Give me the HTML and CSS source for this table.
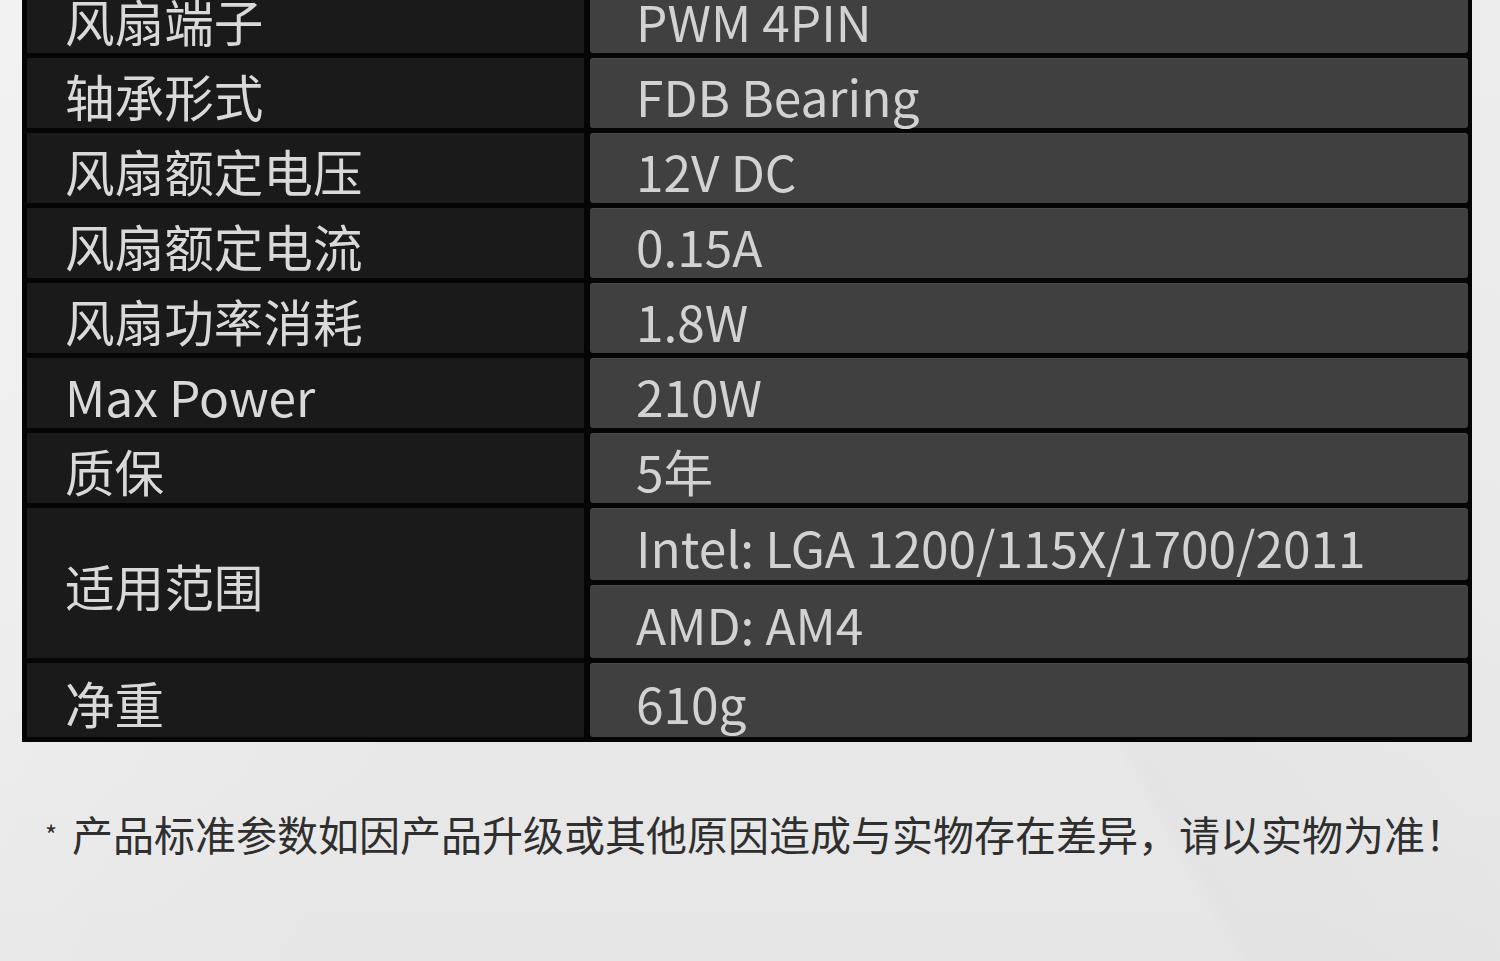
FILE: index.html
```html
<!DOCTYPE html>
<html lang="zh-CN">
<head>
  <meta charset="UTF-8">
  <meta name="viewport" content="width=device-width, initial-scale=1.0">
  <title>产品参数</title>
  <link rel="stylesheet" href="styles.css">
</head>
<body>
  <div class="spec-wrap">
    <div class="spec-table">
      <div class="key">风扇端子</div>
      <div class="val">PWM 4PIN</div>

      <div class="key">轴承形式</div>
      <div class="val">FDB Bearing</div>

      <div class="key">风扇额定电压</div>
      <div class="val">12V DC</div>

      <div class="key">风扇额定电流</div>
      <div class="val">0.15A</div>

      <div class="key">风扇功率消耗</div>
      <div class="val">1.8W</div>

      <div class="key">Max Power</div>
      <div class="val">210W</div>

      <div class="key">质保</div>
      <div class="val">5年</div>

      <div class="key span-2">适用范围</div>
      <div class="val">Intel: LGA 1200/115X/1700/2011</div>
      <div class="val">AMD: AM4</div>

      <div class="key">净重</div>
      <div class="val">610g</div>
    </div>
  </div>

  <p class="note"><span class="star">*</span>产品标准参数如因产品升级或其他原因造成与实物存在差异，请以实物为准！</p>
</body>
</html>
```

FILE: styles.css
```css
* {
  box-sizing: border-box;
}

body {
  margin: 0;
  height: 961px;
  overflow: hidden;
  font-family: "Noto Sans CJK SC", "Noto Sans", sans-serif;
  background:
    linear-gradient(115deg, rgba(255, 255, 255, 0.3) 0%, rgba(255, 255, 255, 0) 40%),
    linear-gradient(60deg, rgba(0, 0, 0, 0) 60%, rgba(0, 0, 0, 0.015) 61%, rgba(0, 0, 0, 0) 85%),
    linear-gradient(180deg, #ededed 0%, #eaeaea 60%, #e6e6e6 100%);
}

.spec-wrap {
  margin: -21px 0 0 22px;
  width: 1450px;
  padding: 4px 4px 5px 5px;
  background: #050505;
}

.spec-table {
  display: grid;
  grid-template-columns: 557px 878px;
  grid-template-rows: repeat(7, 70px) 72px 73px 74px;
  gap: 5px 6px;
}

.key,
.val {
  display: flex;
  align-items: center;
  padding-top: 3px;
  font-size: 49.6px;
  white-space: nowrap;
}

.key {
  background: #1a1a1a;
  color: #d9d9d9;
  padding-left: 38px;
}

.val {
  background: #404040;
  color: #d2d2d2;
  padding-left: 46px;
  border-radius: 3px;
  box-shadow: inset 0 1px 0 rgba(255, 255, 255, 0.06);
}

.span-2 {
  grid-row: span 2;
}

.note {
  margin: 62px 0 0 45px;
  font-size: 41px;
  line-height: 58px;
  color: #2f2f2f;
  white-space: nowrap;
}

.star {
  display: inline-block;
  width: 27px;
  font-size: 26px;
  vertical-align: 6px;
}
```
